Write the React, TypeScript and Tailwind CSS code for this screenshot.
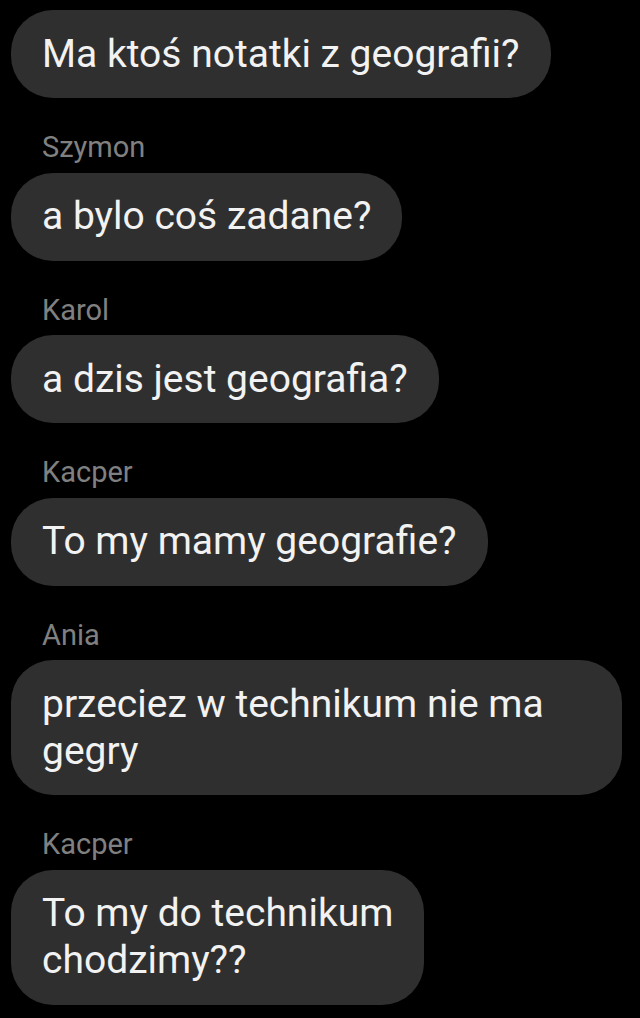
type Msg = { name?: string; lines: string[]; width?: string };

const messages: Msg[] = [
  { lines: ['Ma ktoś notatki z geografii?'] },
  { name: 'Szymon', lines: ['a bylo coś zadane?'] },
  { name: 'Karol', lines: ['a dzis jest geografia?'] },
  { name: 'Kacper', lines: ['To my mamy geografie?'] },
  { name: 'Ania', lines: ['przeciez w technikum nie ma', 'gegry'], width: 'w-[611px]' },
  { name: 'Kacper', lines: ['To my do technikum', 'chodzimy??'] },
];

function Bubble({ lines, width }: { lines: string[]; width?: string }) {
  return (
    <div
      className={`${width ?? 'w-fit'} bg-[#2f2f2f] rounded-[42px] px-[31px] py-[20.5px] text-[39px] leading-[47px] text-[#f2f2f2]`}
    >
      {lines.map((l, i) => (
        <div key={i} className="whitespace-nowrap">
          {l}
        </div>
      ))}
    </div>
  );
}

export default function App() {
  return (
    <div
      className="bg-black min-h-[1018px] w-[640px] pt-[10px] pl-[11px]"
      style={{ fontFamily: 'Roboto, "Noto Sans", sans-serif' }}
    >
      {messages.map((m, i) => (
        <div key={i}>
          {m.name && (
            <div className="pl-[31px] mt-[32px] mb-[8.5px] text-[29px] leading-[34px] text-[#808080]">{m.name}</div>
          )}
          <Bubble lines={m.lines} width={m.width} />
        </div>
      ))}
    </div>
  );
}
